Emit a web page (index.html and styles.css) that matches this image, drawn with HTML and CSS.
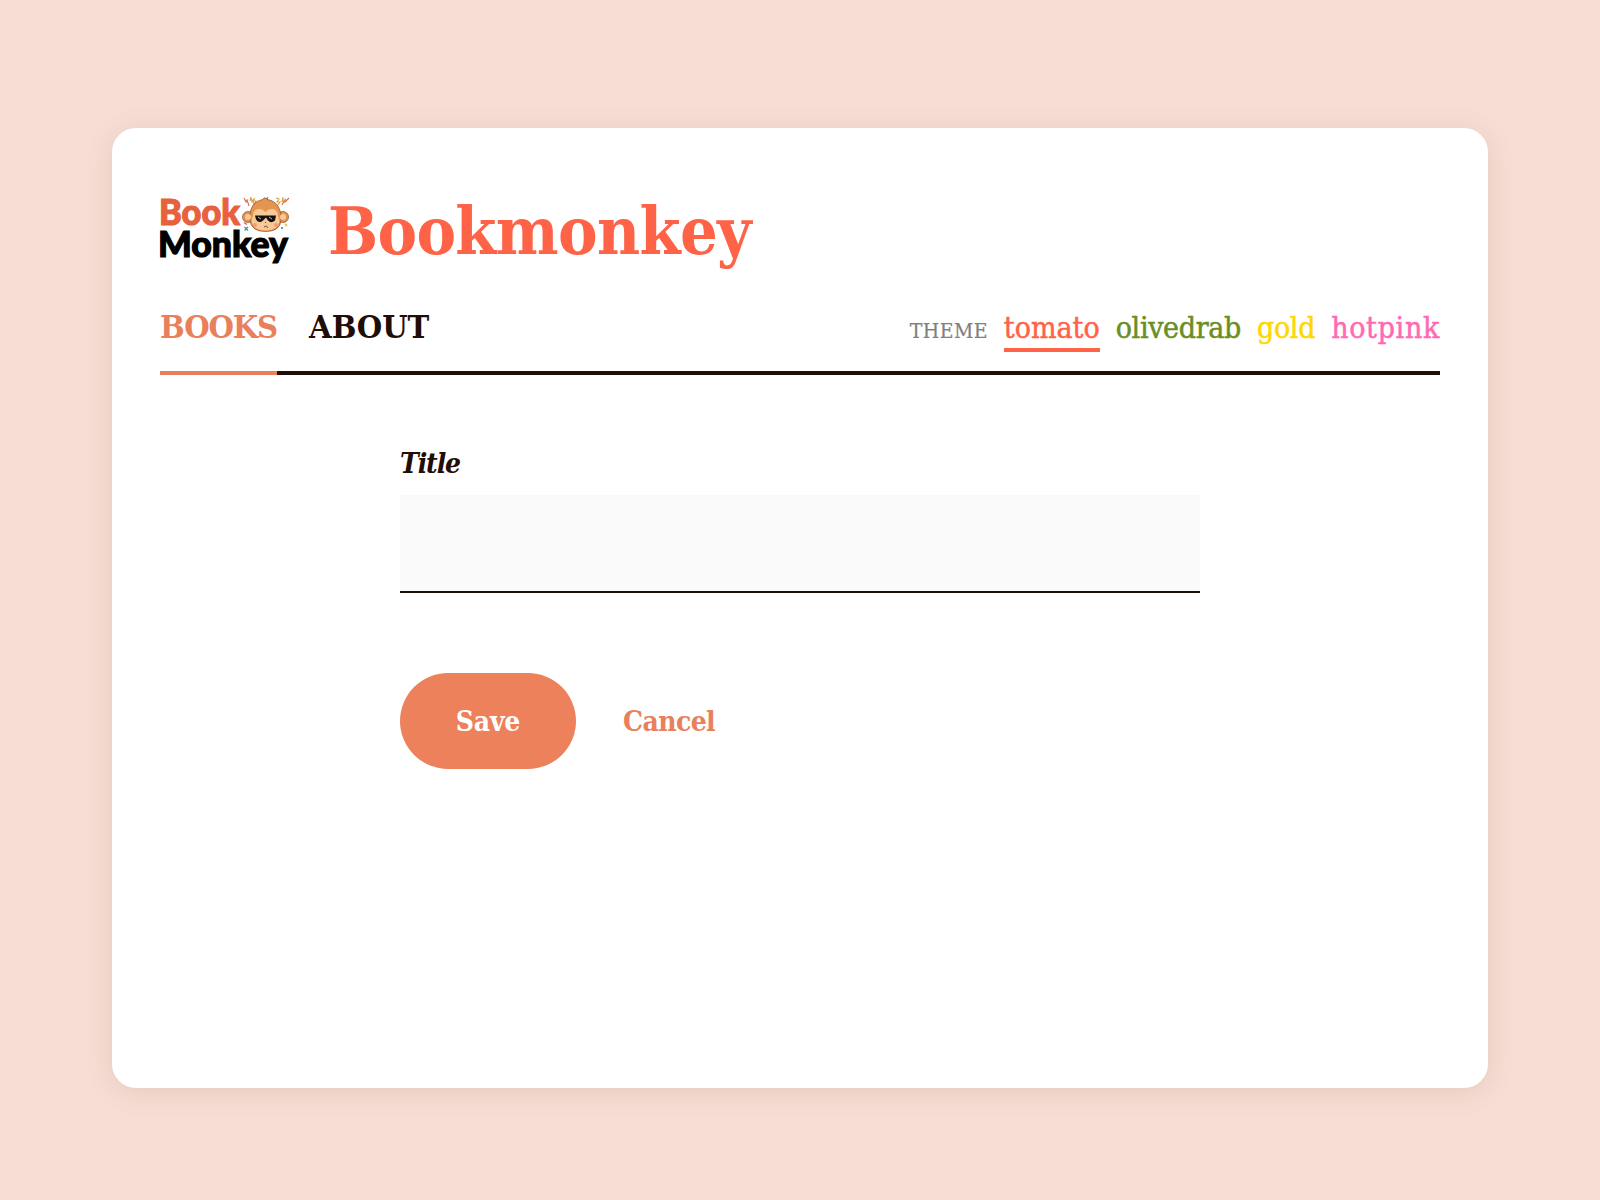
FILE: index.html
```html
<!DOCTYPE html>
<html lang="en">
<head>
<meta charset="utf-8">
<title>Bookmonkey</title>
<link rel="stylesheet" href="styles.css">
</head>
<body>
<main class="card">
  <header class="header">
    <svg class="logo" viewBox="0 0 130 72" role="img" aria-label="Book Monkey">
      <text class="logo-book" x="-1" y="28.5" textLength="81" lengthAdjust="spacingAndGlyphs">Book</text>
      <text class="logo-monkey" x="-2" y="60.5" textLength="130" lengthAdjust="spacingAndGlyphs">Monkey</text>
      <g class="bolts">
        <path class="bolt-red" d="M84 2l2 4 1-2 2 6M129 2l-4 4 0-2-3 5"/>
        <path class="bolt-gold" d="M90 5l1-4 1 5 1-2 1 5M95 2l-2 3 3 0-3 5M116 2l3 1-2 3 3 0-3 4M122 6l1-5 0 5 3-3"/>
      </g>
      <g class="monkey">
        <circle cx="88" cy="21" r="5.5"/><circle cx="123" cy="21" r="5.5"/>
        <path d="M90 24C89 12 94 5 103 3.500q1-3 3-1l2-1-1 2c9 1 15 9 14 21q-1 11-15.500 11T90 24z"/>
      </g>
      <g class="face">
        <circle cx="88" cy="21" r="3"/><circle cx="123" cy="21" r="3"/>
        <path d="M93 20c0-8 8-9 12.500-4 4.500-5 12.500-4 12.500 4 4 8-2 14.500-12.500 14.500S89 28 93 20z"/>
      </g>
      <path class="shades" d="M95 19.500h21l-1 5q-4 3.500-7 0l-2-3-3 3q-4 3.500-7-1z"/>
      <path class="shine" d="M98 21l3 2M109 21l3 2"/>
      <circle class="cheek" cx="95" cy="29" r="2"/><circle class="cheek" cx="116" cy="29" r="2"/>
      <path class="mouth" d="M104 31q3-2.500 4 1M105 26.500h1"/>
      <path class="green" d="M84.500 31l3.500 3.500m0-3.500l-3.500 3.500"/><path class="pink" d="M84 26.500l3 2"/>
      <path class="blue" d="M121 31l2 2m0-2l-2 2"/><path class="yellow" d="M126 27.500v3m-1.500-1.500h3"/>
    </svg>
    <h1 class="title">Bookmonkey</h1>
  </header>
  <div class="bar">
    <nav class="nav">
      <a class="nav-link nav-link-active">BOOKS</a>
      <a class="nav-link nav-about">ABOUT</a>
    </nav>
    <div class="themes">
      <span class="theme-label">THEME</span>
      <a class="theme tomato theme-active">tomato</a>
      <a class="theme olivedrab">olivedrab</a>
      <a class="theme gold">gold</a>
      <a class="theme hotpink">hotpink</a>
    </div>
  </div>
  <form class="form">
    <label class="label" for="book-title">Title</label>
    <input class="input" id="book-title" type="text">
    <div class="actions">
      <button class="save" type="button">Save</button>
      <a class="cancel">Cancel</a>
    </div>
  </form>
</main>
</body>
</html>
```
FILE: styles.css
```css
* { box-sizing: border-box; }
body {
  margin: 0;
  height: 1200px;
  padding: 128px 112px 112px;
  background: #f7ddd4;
  color: #1f0d08;
  font-family: "DejaVu Serif Condensed", "DejaVu Serif", serif;
  font-stretch: condensed;
}
.card {
  height: 960px;
  padding: 64px 48px;
  background: #fff;
  border-radius: 24px;
  box-shadow: 0 4px 28px rgba(120, 100, 50, 0.14);
}
.header { display: flex; height: 80px; gap: 38px; }
.logo { flex: none; width: 130px; height: 72px; margin-top: 4px; overflow: visible; }
.logo-book, .logo-monkey { font-family: Lato, sans-serif; font-weight: 900; stroke-width: 1.2px; }
.logo-book { fill: #e8613f; stroke: #e8613f; font-size: 36px; }
.logo-monkey { fill: #000; stroke: #000; font-size: 36px; }
.bolts path { fill: none; stroke-width: 1.1; }
.bolts .bolt-red { stroke: #dc6a50; }
.bolts .bolt-gold { stroke: #e0a04a; }
.monkey { fill: #e69550; stroke: #8a4b23; stroke-width: 0.7; }
.face { fill: #f8c896; }
.shades { fill: #16110f; }
.shine { stroke: #fff; stroke-width: 0.7; }
.cheek { fill: #f49a74; }
.mouth { fill: none; stroke: #70432c; stroke-width: 0.9; }
.green { stroke: #3aa876; stroke-width: 1.4; }
.pink { stroke: #e0528b; stroke-width: 1.4; }
.blue { stroke: #3fb3a5; stroke-width: 1; }
.yellow { stroke: #e8b53c; stroke-width: 1; fill: none; }
.title { margin: 0; color: #ff6347; font-size: 66px; line-height: 79px; font-weight: 700; letter-spacing: -0.68px; }
.bar {
  display: flex;
  justify-content: space-between;
  height: 103px;
  border-bottom: 4px solid #1f0d08;
}
.nav { display: flex; gap: 32px; height: 103px; }
.nav-link { padding-top: 35px; font-size: 32.5px; line-height: 40px; font-weight: 700; letter-spacing: -1.15px; }
.nav-link-active { color: #e9805b; border-bottom: 4px solid #e9805b; }
.nav-about { letter-spacing: -0.1px; }
.themes { display: flex; align-items: baseline; gap: 16px; padding-top: 36px; }
.theme-label { color: #808080; font-size: 21px; letter-spacing: 0.4px; -webkit-text-stroke: 0.2px; }
.theme { height: 44px; font-size: 30px; line-height: 40px; border-bottom: 4px solid transparent; -webkit-text-stroke: 0.5px; }
.theme-active { border-color: #ff6347; }
.tomato { color: #ff6347; }
.olivedrab { color: #6b8e23; letter-spacing: -0.34px; }
.gold { color: #ffd700; letter-spacing: -0.3px; }
.hotpink { color: #ff69b4; letter-spacing: 0.68px; }
.form { display: flex; flex-direction: column; width: 800px; margin: 69px auto 0; }
.label { font-size: 28px; line-height: 40px; font-weight: 700; font-style: italic; letter-spacing: -1.1px; }
.input { height: 98px; margin-top: 11px; padding: 0 24px; border: 0; border-bottom: 2px solid #1f0d08; background: #fafafa; font: inherit; font-size: 28px; }
.actions { display: flex; align-items: center; gap: 47px; margin-top: 80px; font-size: 28px; font-weight: 700; }
.save { width: 176px; height: 96px; padding: 0; border: 0; border-radius: 48px; background: #ec815b; color: #fff; font: inherit; letter-spacing: -0.2px; }
.cancel { color: #e9805b; letter-spacing: -0.6px; }
```
